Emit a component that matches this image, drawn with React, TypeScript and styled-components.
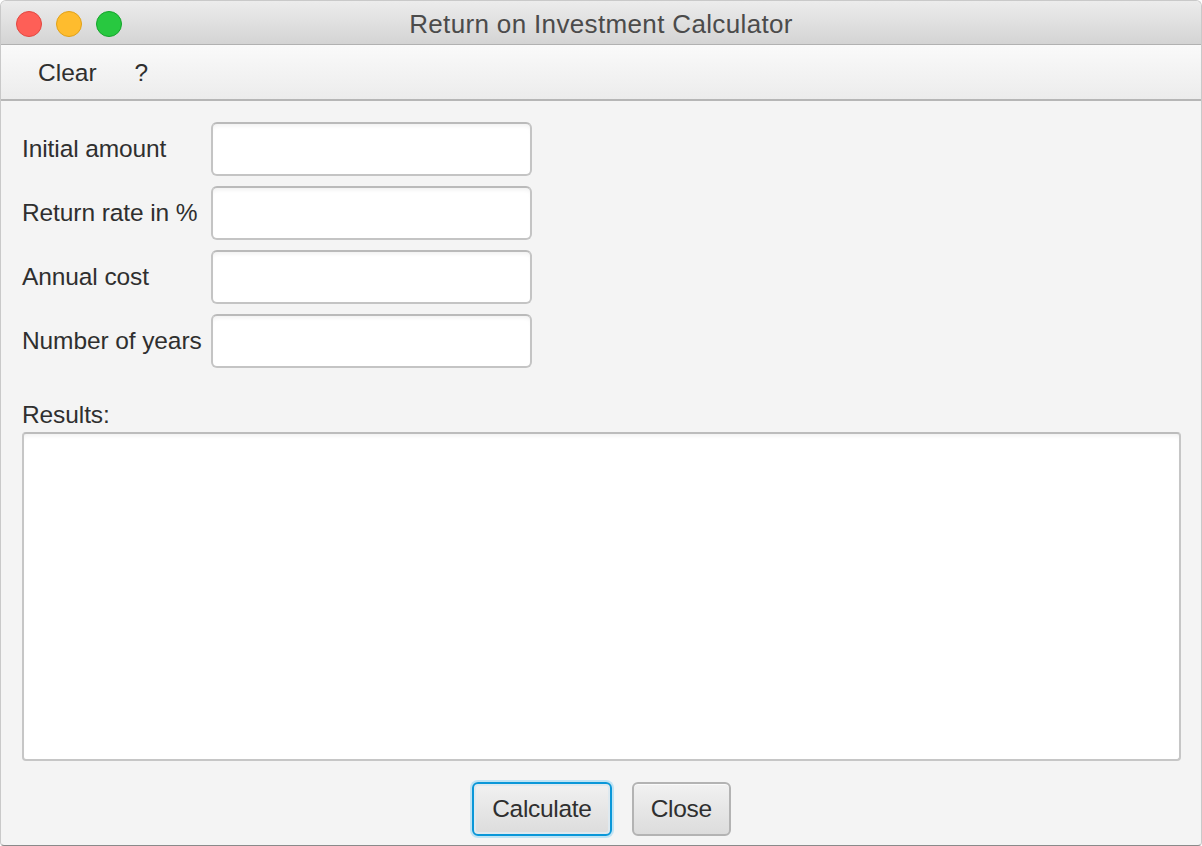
import React from "react";
import styled, { createGlobalStyle } from "styled-components";

const Global = createGlobalStyle`
  html, body { margin: 0; padding: 0; background: #ffffff; }
  body { font-family: "Liberation Sans", Arial, sans-serif; }
  * { box-sizing: border-box; }
`;

const Window = styled.div`
  width: 1202px;
  height: 846px;
  display: flex;
  flex-direction: column;
  border-radius: 6px 6px 4px 4px;
  overflow: hidden;
  border: 1px solid #c9c9c9;
  border-bottom: 1px solid #8a8a8a;
  background: #f4f4f4;
`;

const TitleBar = styled.div`
  position: relative;
  height: 44px;
  flex: none;
  display: flex;
  align-items: center;
  justify-content: center;
  padding-top: 3px;
  background: linear-gradient(#ececec, #d4d4d4);
  border-bottom: 1px solid #b1b1b1;
`;

const Lights = styled.div`
  position: absolute;
  left: 15px;
  top: 10px;
  display: flex;
  gap: 14px;
`;

const Light = styled.span<{ $fill: string; $edge: string }>`
  width: 26px;
  height: 26px;
  border-radius: 50%;
  background: ${(p) => p.$fill};
  border: 1px solid ${(p) => p.$edge};
`;

const Title = styled.div`
  font-size: 26px;
  color: #4b4b4b;
  letter-spacing: 0.35px;
`;

const MenuBar = styled.div`
  height: 56px;
  flex: none;
  display: flex;
  align-items: center;
  padding-left: 18px;
  padding-top: 2px;
  background: linear-gradient(#fafafa, #ececec);
  border-bottom: 2px solid #b6b6b6;
`;

const MenuItem = styled.div`
  font-size: 24.5px;
  color: #2f2f2f;
  padding: 0 19px;
`;

const Content = styled.div`
  flex: 1;
  display: flex;
  flex-direction: column;
  padding: 21px 20px 9px 21px;
`;

const Form = styled.div`
  display: grid;
  grid-template-columns: 190px 320px;
  row-gap: 10px;
  align-items: center;
`;

const Label = styled.label`
  font-size: 24.5px;
  color: #2f2f2f;
  letter-spacing: -0.1px;
  white-space: nowrap;
`;

const Field = styled.div`
  height: 54px;
  margin-left: -1px;
  background: #ffffff;
  border: 2px solid #c4c4c4;
  border-top-color: #bababa;
  border-radius: 6px;
  box-shadow: inset 0 4px 4px -2px rgba(0, 0, 0, 0.06);
`;

const ResultsLabel = styled(Label)`
  margin-top: 33px;
  margin-bottom: 3px;
`;

const TextArea = styled.div`
  flex: 1;
  background: #ffffff;
  border: 2px solid #c6c6c6;
  border-top-color: #bcbcbc;
  border-radius: 4px;
  box-shadow: inset 0 4px 4px -2px rgba(0, 0, 0, 0.06);
`;

const Buttons = styled.div`
  display: flex;
  justify-content: center;
  gap: 20px;
  margin-top: 21px;
`;

const Button = styled.button<{ $focused?: boolean }>`
  height: 54px;
  padding: 0 ${(p) => (p.$focused ? 18 : 17)}px;
  font-family: "Liberation Sans", Arial, sans-serif;
  font-size: 24.5px;
  color: #2f2f2f;
  border-radius: 6px;
  background: linear-gradient(#f1f1f1, #dcdcdc);
  border: 2px solid ${(p) => (p.$focused ? "#0a97d8" : "#b3b3b3")};
  box-shadow: ${(p) =>
    p.$focused
      ? "0 0 0 2px #bfe3f4, inset 0 0 0 2px #dfe9ef"
      : "inset 0 1px 0 #fafafa"};
  letter-spacing: -0.3px;
`;

export default function App() {
  return (
    <>
      <Global />
      <Window>
        <TitleBar>
          <Lights>
            <Light $fill="#fe5f57" $edge="#e2463f" />
            <Light $fill="#febc2e" $edge="#e1a116" />
            <Light $fill="#28c840" $edge="#13a42a" />
          </Lights>
          <Title>Return on Investment Calculator</Title>
        </TitleBar>
        <MenuBar>
          <MenuItem>Clear</MenuItem>
          <MenuItem>?</MenuItem>
        </MenuBar>
        <Content>
          <Form>
            <Label>Initial amount</Label>
            <Field />
            <Label>Return rate in %</Label>
            <Field />
            <Label>Annual cost</Label>
            <Field />
            <Label>Number of years</Label>
            <Field />
          </Form>
          <ResultsLabel>Results:</ResultsLabel>
          <TextArea />
          <Buttons>
            <Button $focused>Calculate</Button>
            <Button>Close</Button>
          </Buttons>
        </Content>
      </Window>
    </>
  );
}
